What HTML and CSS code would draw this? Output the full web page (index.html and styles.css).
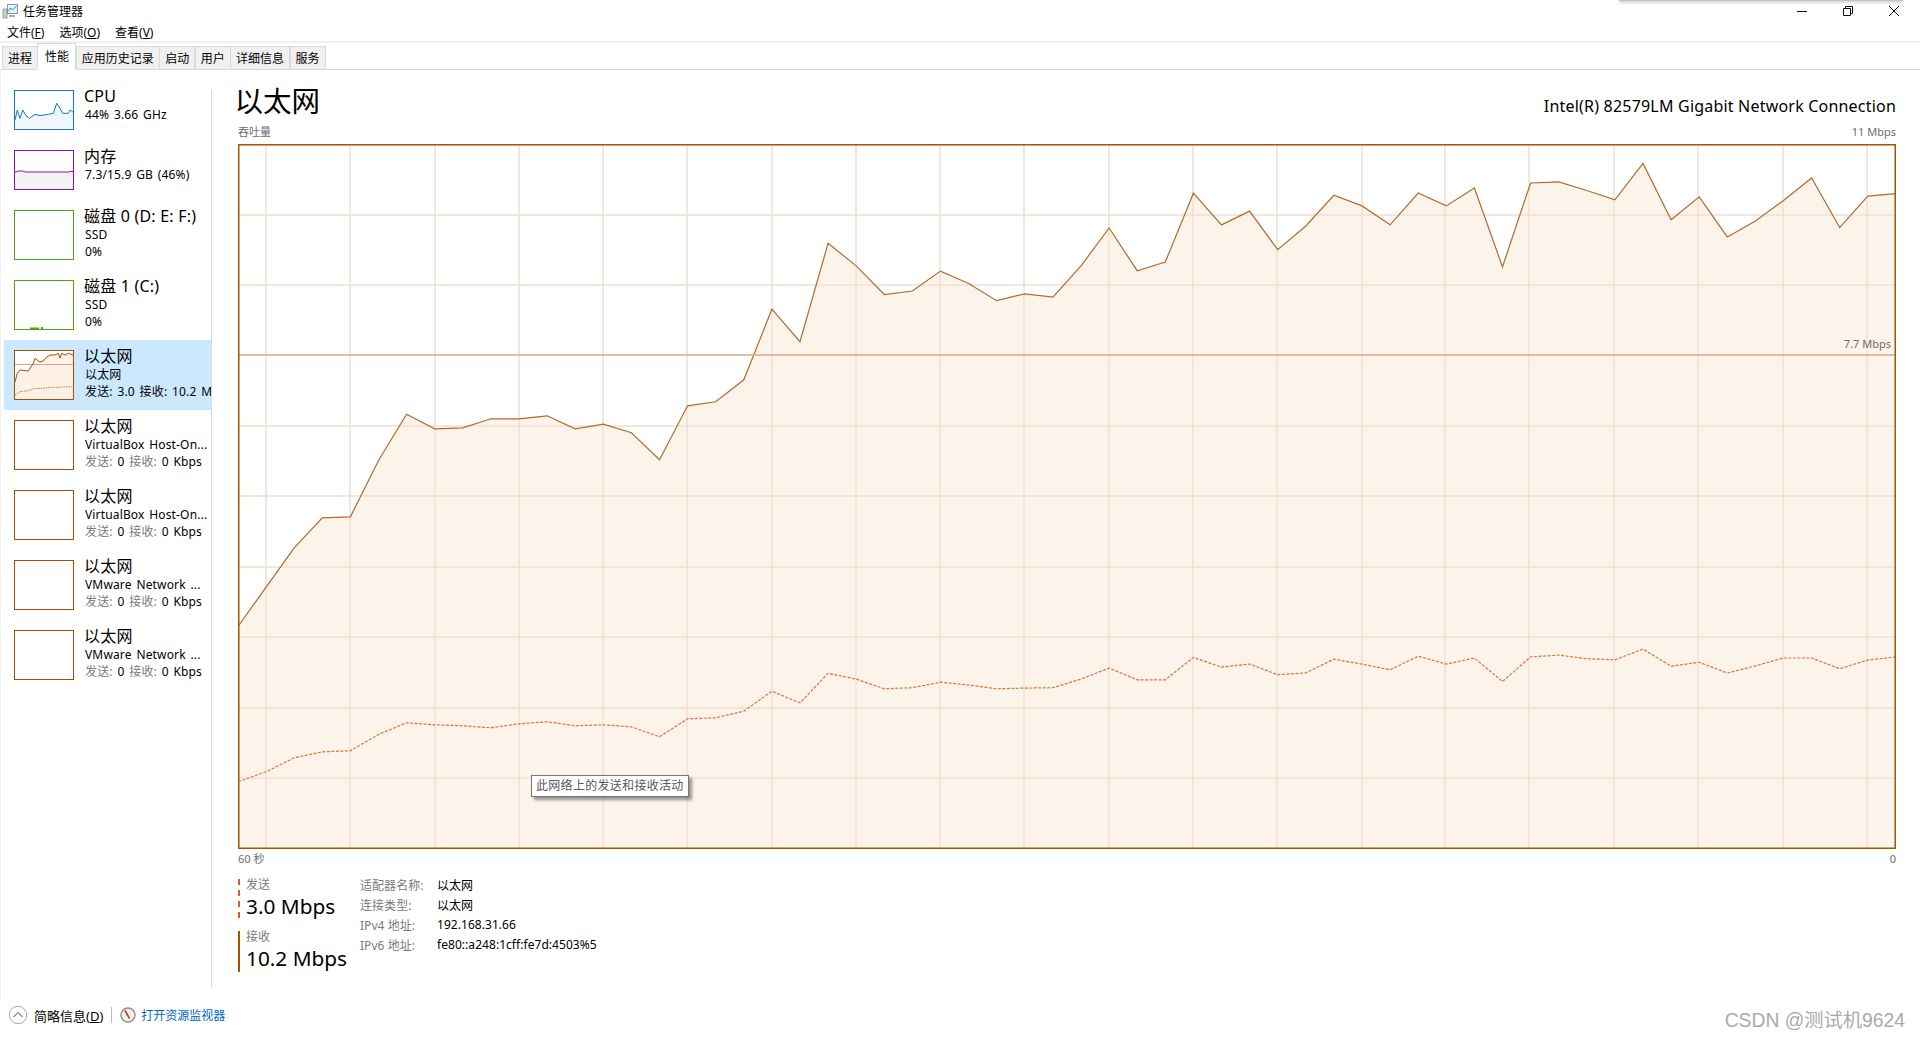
FILE: index.html
```html
<!DOCTYPE html>
<html>
<head>
    <title>任务管理器</title>
    <link rel="stylesheet" href="styles.css">
</head>
<body>
    <div class="top-shadow"></div>

    <div class="titlebar">
        <div class="app-title">
            <svg class="app-icon" width="16" height="16" viewBox="0 0 16 16">
                <rect x="5.5" y="1.5" width="10" height="9" fill="#eaf3f8" stroke="#7f9aa8"/>
                <polyline points="6.5,8 8.5,5 10.5,7 14.5,3" fill="none" stroke="#2b7fb0"/>
                <rect x="1" y="6" width="4" height="9" fill="#c9cfd2" stroke="#7d8589" stroke-width="0.7"/>
                <rect x="7" y="12" width="6" height="2" fill="#a9b1b5"/>
            </svg>
            <span>任务管理器</span>
        </div>
        <div class="win-buttons">
            <svg width="12" height="12" viewBox="0 0 12 12"><line x1="1" y1="6.5" x2="11" y2="6.5" stroke="#111"/></svg>
            <svg width="12" height="12" viewBox="0 0 12 12"><path d="M1.5 3.5h7v7h-7zM3.5 3.5v-2h7v7h-2" fill="none" stroke="#111"/></svg>
            <svg width="12" height="12" viewBox="0 0 12 12"><path d="M1 1l10 10M11 1L1 11" fill="none" stroke="#111"/></svg>
        </div>
    </div>

    <div class="menubar">
        <span>文件(<u>F</u>)</span>
        <span>选项(<u>O</u>)</span>
        <span>查看(<u>V</u>)</span>
    </div>

    <div class="tabs">
        <div class="tab">进程</div>
        <div class="tab active">性能</div>
        <div class="tab">应用历史记录</div>
        <div class="tab">启动</div>
        <div class="tab">用户</div>
        <div class="tab">详细信息</div>
        <div class="tab">服务</div>
    </div>

    <div class="main">
        <div class="sidebar">
            <div class="item">
                <svg class="thumb cpu" width="60" height="40" viewBox="0 0 60 40">
                    <polygon points="1,30 3.3,20 6,28.3 8.7,20 12,25.7 15.3,28.3 21,24.3 26,25.7 34.3,24.3 39.3,23.3 42.7,13.3 46,18.3 48.7,23.3 54.3,23.3 56,20 59.3,22.3 59.3,39 1,39" fill="#f1f6fa" stroke="none"/>
                    <polyline points="1,30 3.3,20 6,28.3 8.7,20 12,25.7 15.3,28.3 21,24.3 26,25.7 34.3,24.3 39.3,23.3 42.7,13.3 46,18.3 48.7,23.3 54.3,23.3 56,20 59.3,22.3" fill="none" stroke="#117dbb"/>
                    <rect class="frame" x="0.5" y="0.5" width="59" height="39"/>
                </svg>
                <div class="info">
                    <div class="name">CPU</div>
                    <div class="line">44% 3.66 GHz</div>
                </div>
            </div>
            <div class="item">
                <svg class="thumb mem" width="60" height="40" viewBox="0 0 60 40">
                    <rect x="1" y="22" width="58" height="17" fill="#f4f2f4"/>
                    <polyline points="1,22 5,21 9,21 11,22 55,22 58,21 59,22" fill="none" stroke="#8b12ae"/>
                    <rect class="frame" x="0.5" y="0.5" width="59" height="39"/>
                </svg>
                <div class="info">
                    <div class="name">内存</div>
                    <div class="line">7.3/15.9 GB (46%)</div>
                </div>
            </div>
            <div class="item">
                <svg class="thumb disk" width="60" height="50" viewBox="0 0 60 50">
                    <rect class="frame" x="0.5" y="0.5" width="59" height="49"/>
                </svg>
                <div class="info">
                    <div class="name">磁盘 0 (D: E: F:)</div>
                    <div class="line">SSD</div>
                    <div class="line">0%</div>
                </div>
            </div>
            <div class="item">
                <svg class="thumb disk" width="60" height="50" viewBox="0 0 60 50">
                    <polyline points="16,48.5 22,48.5 25,48.5" fill="none" stroke="#4da60c" stroke-width="2"/>
                    <rect x="27" y="47" width="2" height="2" fill="#4da60c"/>
                    <rect class="frame" x="0.5" y="0.5" width="59" height="49"/>
                </svg>
                <div class="info">
                    <div class="name">磁盘 1 (C:)</div>
                    <div class="line">SSD</div>
                    <div class="line">0%</div>
                </div>
            </div>
            <div class="item selected">
                <svg class="thumb eth" width="60" height="50" viewBox="0 0 60 50">
                    <rect x="1" y="1" width="58" height="48" fill="#fff"/>
                    <polygon points="1,32 3.3,23 6,20 14.3,21 19.3,13.3 21,8.3 26,12 29.3,11 32.7,7 36,5 41,5 44.3,3.3 46,8.3 47.7,3.3 51,5 54.3,3.3 59,5 59,49 1,49" fill="#fdf1e8"/>
                    <line x1="1" y1="14.5" x2="59" y2="14.5" stroke="#dba77f" stroke-width="1"/>
                    <polyline points="1,32 3.3,23 6,20 14.3,21 19.3,13.3 21,8.3 26,12 29.3,11 32.7,7 36,5 41,5 44.3,3.3 46,8.3 47.7,3.3 51,5 54.3,3.3 59,5" fill="none" stroke="#a74f01"/>
                    <polyline points="1,45 6,41.7 14.3,40.7 21,38.3 29.3,38.3 36,37.3 46,37.3 52.7,36.7 59,36.7" fill="none" stroke="#e2703a" stroke-dasharray="1.5 1"/>
                    <rect class="frame" x="0.5" y="0.5" width="59" height="49"/>
                </svg>
                <div class="info">
                    <div class="name">以太网</div>
                    <div class="line">以太网</div>
                    <div class="line">发送: 3.0 接收: 10.2 M</div>
                </div>
            </div>
            <div class="item">
                <svg class="thumb eth" width="60" height="50" viewBox="0 0 60 50"><rect class="frame" x="0.5" y="0.5" width="59" height="49"/></svg>
                <div class="info">
                    <div class="name">以太网</div>
                    <div class="line">VirtualBox Host-On...</div>
                    <div class="line"><span class="dim">发送:</span> 0 <span class="dim">接收:</span> 0 Kbps</div>
                </div>
            </div>
            <div class="item">
                <svg class="thumb eth" width="60" height="50" viewBox="0 0 60 50"><rect class="frame" x="0.5" y="0.5" width="59" height="49"/></svg>
                <div class="info">
                    <div class="name">以太网</div>
                    <div class="line">VirtualBox Host-On...</div>
                    <div class="line"><span class="dim">发送:</span> 0 <span class="dim">接收:</span> 0 Kbps</div>
                </div>
            </div>
            <div class="item">
                <svg class="thumb eth" width="60" height="50" viewBox="0 0 60 50"><rect class="frame" x="0.5" y="0.5" width="59" height="49"/></svg>
                <div class="info">
                    <div class="name">以太网</div>
                    <div class="line">VMware Network ...</div>
                    <div class="line"><span class="dim">发送:</span> 0 <span class="dim">接收:</span> 0 Kbps</div>
                </div>
            </div>
            <div class="item">
                <svg class="thumb eth" width="60" height="50" viewBox="0 0 60 50"><rect class="frame" x="0.5" y="0.5" width="59" height="49"/></svg>
                <div class="info">
                    <div class="name">以太网</div>
                    <div class="line">VMware Network ...</div>
                    <div class="line"><span class="dim">发送:</span> 0 <span class="dim">接收:</span> 0 Kbps</div>
                </div>
            </div>
        </div>

        <div class="vsep"></div>

        <div class="content">
            <div class="head">
                <div class="big-title">以太网</div>
                <div class="adapter">Intel(R) 82579LM Gigabit Network Connection</div>
            </div>
            <div class="axis-top">
                <span>吞吐量</span>
                <span>11 Mbps</span>
            </div>

            <div class="chart">
                <svg width="1658" height="705" viewBox="238 143.5 1658 705">
                    <g class="grid">
                        <path d="M266 144V848M350 144V848M435 144V848M519 144V848M603 144V848M687 144V848M772 144V848M856 144V848M940 144V848M1024 144V848M1109 144V848M1193 144V848M1277 144V848M1362 144V848M1445 144V848M1529 144V848M1614 144V848M1698 144V848M1783 144V848M1867 144V848"/>
                        <path d="M238 214.5H1896M238 284.5H1896M238 425.5H1896M238 495.5H1896M238 566.5H1896M238 636.5H1896M238 707.5H1896M238 777.5H1896"/>
                    </g>
                    <polygon class="area" points="238,626 266.1,586.7 294.2,547.3 322.3,517.3 350.4,516.3 378.5,460 406.6,413.7 434.7,428.3 462.8,427.3 490.9,418.3 519,418.3 547.1,415.3 575.2,428.3 603.3,423.7 631.4,432.3 659.5,459.3 687.6,405.3 715.7,401.3 743.8,379.3 771.9,308.7 800,341.2 828.1,242.7 856.2,265.4 884.3,294 912.4,290.5 940.5,270.6 968.6,283 996.7,300.2 1024.8,293.3 1052.9,296.7 1081,265.4 1109.1,227.5 1137.2,270.2 1165.3,261.6 1193.4,192.7 1221.5,224.4 1249.6,210.6 1277.7,249.2 1305.8,225.5 1333.9,194.8 1362,205.4 1390.1,224.3 1418.2,192.5 1446.3,205.4 1474.4,187.5 1502.5,266.4 1530.6,182.5 1558.7,181.4 1586.8,190 1614.9,199.3 1643,162.9 1671.1,219.3 1699.2,196.4 1727.3,236.4 1755.4,220.4 1783.5,200 1811.6,177.5 1839.7,227.1 1867.8,195.7 1896,193.2 1896,848 238,848"/>
                    <line class="limit" x1="238" y1="354.5" x2="1896" y2="354.5"/>
                    <polyline class="send" points="238,781.3 266.1,771.3 294.2,757.3 322.3,751.3 350.4,750.3 378.5,734 406.6,722.3 434.7,724.3 462.8,725.3 490.9,727.3 519,723.3 547.1,721.3 575.2,725.3 603.3,724.3 631.4,726.3 659.5,736.3 687.6,718.3 715.7,717.3 743.8,710.7 771.9,690.7 800,702.4 828.1,672.8 856.2,678.6 884.3,688.3 912.4,687.2 940.5,681.7 968.6,684.5 996.7,688.3 1024.8,687.6 1052.9,687.2 1081,678.6 1109.1,667.6 1137.2,679.3 1165.3,679.3 1193.4,656.9 1221.5,666.6 1249.6,663.5 1277.7,674.2 1305.8,672.4 1333.9,658.7 1362,663.6 1390.1,669.3 1418.2,655.7 1446.3,663.6 1474.4,657.5 1502.5,681 1530.6,656.4 1558.7,654.6 1586.8,658.2 1614.9,659.3 1643,648.6 1671.1,665.7 1699.2,661.8 1727.3,672.5 1755.4,665.4 1783.5,657.5 1811.6,657.5 1839.7,668.2 1867.8,659.6 1896,656.4"/>
                    <rect class="border" x="238.75" y="144.25" width="1656.5" height="703.5"/>
                </svg>
                <span class="limit-label">7.7 Mbps</span>
                <div class="tooltip">此网络上的发送和接收活动</div>
            </div>

            <div class="axis-bottom">
                <span>60 秒</span>
                <span>0</span>
            </div>

            <div class="stats">
                <div class="rates">
                    <div class="rate dashed">
                        <div class="rate-label">发送</div>
                        <div class="rate-value">3.0 Mbps</div>
                    </div>
                    <div class="rate solid">
                        <div class="rate-label">接收</div>
                        <div class="rate-value">10.2 Mbps</div>
                    </div>
                </div>
                <div class="props">
                    <span class="key">适配器名称:</span><span>以太网</span>
                    <span class="key">连接类型:</span><span>以太网</span>
                    <span class="key">IPv4 地址:</span><span>192.168.31.66</span>
                    <span class="key">IPv6 地址:</span><span>fe80::a248:1cff:fe7d:4503%5</span>
                </div>
            </div>
        </div>
    </div>

    <div class="footer">
        <svg width="20" height="20" viewBox="0 0 20 20">
            <circle cx="10" cy="10" r="8.7" fill="#fff" stroke="#a8a8a8"/>
            <polyline points="5.5,12 10,7.5 14.5,12" fill="none" stroke="#8a8a8a" stroke-width="1.2"/>
        </svg>
        <span class="fewer">简略信息(<u>D</u>)</span>
        <span class="foot-sep"></span>
        <svg width="16" height="16" viewBox="0 0 16 16">
            <circle cx="8" cy="8" r="7" fill="#f3f0ea" stroke="#8e8e86" stroke-width="1.4"/>
            <line x1="5" y1="3.5" x2="9.5" y2="11.5" stroke="#c0392b" stroke-width="1.6"/>
        </svg>
        <span class="monitor-link">打开资源监视器</span>
    </div>

    <div class="watermark">CSDN @测试机9624</div>
</body>
</html>
```

FILE: styles.css
```css
html, body { margin: 0; height: 100%; }
body { position: relative; width: 1920px; height: 1039px; overflow: hidden; background: #fff; color: #000; font-family: "Noto Sans", "Noto Sans CJK SC", sans-serif; font-size: 12px; }
svg { display: block; }
u { text-decoration: underline; }

.top-shadow { position: absolute; top: 0; left: 1619px; width: 284px; height: 1px; background: #c4c4c4; box-shadow: 0 1px 3px rgba(0,0,0,0.45); }

.titlebar { display: flex; justify-content: space-between; align-items: center; height: 22px; }
.app-title { display: flex; align-items: center; gap: 5px; padding-left: 2px; }
.win-buttons { display: flex; gap: 34px; padding-right: 20px; }

.menubar { display: flex; gap: 15px; height: 19px; padding-left: 7px; line-height: 22px; }

.tabs { display: flex; align-items: flex-end; height: 26px; padding-left: 2px; border-top: 2px solid #f0f0f0; border-bottom: 1px solid #d9d9d9; }
.tab { height: 22px; line-height: 24px; padding: 0 5px; margin-bottom: -1px; margin-right: -0.6px; background: #f0f0f0; border: 1px solid #d9d9d9; }
.tab.active { height: 25px; line-height: 25px; padding: 0 6.5px; background: #fff; border-bottom-color: #fff; }

.main { display: flex; height: 930px; border-left: 1px solid #f0f0f0; }

.sidebar { width: 207px; margin-left: 3px; padding-top: 10px; flex-shrink: 0; }
.item { display: flex; gap: 11px; padding: 10px 0 10px 10px; overflow: hidden; }
.item.selected { background: #cce8ff; }
.thumb { flex-shrink: 0; }
.frame { fill: none; }
.cpu .frame { stroke: #117dbb; }
.mem .frame { stroke: #8b12ae; }
.disk .frame { stroke: #4da60c; }
.eth .frame { stroke: #a74f01; }
.info { margin-top: -4px; white-space: nowrap; }
.name { font-size: 16px; line-height: 20px; margin-left: -1px; letter-spacing: 0.2px; }
.line { font-size: 12px; line-height: 17px; letter-spacing: 0.15px; word-spacing: 1.5px; }
.dim { color: #7b7b7b; }

.vsep { width: 1px; margin: 20px 0 12px; background: #d9d9d9; }

.content { width: 1658px; margin-left: 26px; display: flex; flex-direction: column; }
.head { display: flex; justify-content: space-between; align-items: flex-end; height: 48px; }
.big-title { font-size: 28.5px; line-height: 38px; margin-left: -3.5px; position: relative; top: 2px; }
.adapter { font-size: 16px; line-height: 22px; margin-bottom: 1.5px; letter-spacing: 0.2px; }
.axis-top, .axis-bottom { display: flex; justify-content: space-between; color: #6d6d6d; font-size: 11px; }
.axis-top { height: 25.5px; line-height: 28px; }
.axis-bottom { height: 20px; line-height: 20px; }

.chart { position: relative; height: 705px; }
.grid path { fill: none; stroke: #eedfd2; stroke-width: 1.5; }
.area { fill: #f8e3d0; fill-opacity: 0.42; stroke: #b56a2b; stroke-width: 1.2; }
.limit { stroke: #d9a987; stroke-width: 1.5; }
.send { fill: none; stroke: #e2703a; stroke-width: 1.2; stroke-dasharray: 3 1.5; }
.border { fill: none; stroke: #a45500; stroke-width: 1.5; }
.limit-label { position: absolute; top: 192px; right: 5px; font-size: 11px; color: #6d6d6d; }
.tooltip { position: absolute; left: 293px; top: 631px; padding: 0 4px; height: 20px; line-height: 20px; background: #fff; border: 1px solid #767676; color: #575757; white-space: nowrap; letter-spacing: 0.3px; box-shadow: 3px 3px 3px rgba(0,0,0,0.4); }

.stats { display: flex; padding-top: 10px; }
.rates { width: 122px; }
.rate { height: 39px; padding-left: 6px; margin-bottom: 13px; }
.rate.dashed { border-left: 2px dashed #c9622d; }
.rate.solid { border-left: 2px solid #a45500; height: 41px; }
.rate-label { height: 14px; line-height: 12px; color: #7b7b7b; }
.rate-value { font-size: 20.8px; line-height: 26px; }

.props { display: grid; grid-template-columns: 77px auto; grid-auto-rows: 20px; align-items: center; margin-top: -4px; letter-spacing: 0.05px; }
.key { color: #7b7b7b; }

.footer { display: flex; align-items: center; height: 30px; padding-left: 8px; }
.fewer { margin-left: 6px; font-size: 13px; }
.foot-sep { width: 1px; height: 16px; margin: 0 8px; background: #bdbdbd; }
.monitor-link { margin-left: 5px; color: #0066cc; }

.watermark { position: absolute; right: 15px; top: 1005px; font-family: "Liberation Sans", "Noto Sans CJK SC", sans-serif; font-size: 19.3px; color: #aaa; }
```
